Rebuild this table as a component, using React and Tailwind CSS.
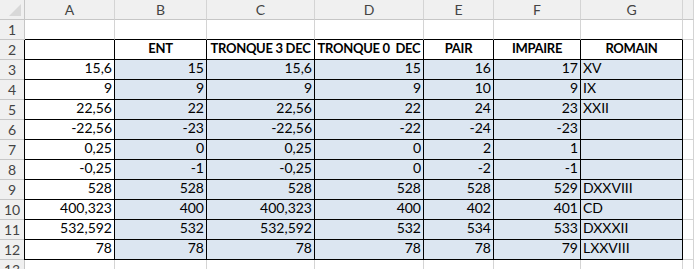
const cols = ["A", "B", "C", "D", "E", "F", "G", ""]

const headers = ["", "ENT", "TRONQUE 3 DEC", "TRONQUE 0  DEC", "PAIR", "IMPAIRE", "ROMAIN"]

const rows = [
  ["15,6", "15", "15,6", "15", "16", "17", "XV"],
  ["9", "9", "9", "9", "10", "9", "IX"],
  ["22,56", "22", "22,56", "22", "24", "23", "XXII"],
  ["-22,56", "-23", "-22,56", "-22", "-24", "-23", ""],
  ["0,25", "0", "0,25", "0", "2", "1", ""],
  ["-0,25", "-1", "-0,25", "0", "-2", "-1", ""],
  ["528", "528", "528", "528", "528", "529", "DXXVIII"],
  ["400,323", "400", "400,323", "400", "402", "401", "CD"],
  ["532,592", "532", "532,592", "532", "534", "533", "DXXXII"],
  ["78", "78", "78", "78", "78", "79", "LXXVIII"],
]

const gridCols = "grid grid-cols-[25px_90px_92px_108px_109px_70px_87px_102px_1fr]"

const RowHead = ({ n }) => (
  <div className="h-[20px] bg-[#f0f0f0] border-r border-b border-[#c6c6c6] text-[#444] flex items-center justify-center text-[14px]">
    {n}
  </div>
)

const Blank = ({ bottomBlack }) => (
  <div
    className={`h-[20px] border-r border-r-[#d4d4d4] border-b ${
      bottomBlack ? "border-b-black" : "border-b-[#d4d4d4]"
    }`}
  />
)

const App = () => {
  return (
    <div
      className="w-[694px] h-[269px] overflow-hidden bg-white text-black"
      style={{ fontFamily: "Lato, 'Open Sans', sans-serif" }}
    >
      {/* column letters */}
      <div className={gridCols}>
        <div className="relative h-[20px] bg-[#f0f0f0] border-r border-b border-[#c6c6c6]">
          <div className="absolute right-[3px] bottom-[3px] w-0 h-0 border-l-[12px] border-l-transparent border-b-[12px] border-b-[#d8d8d8]" />
        </div>
        {cols.map((c, i) => (
          <div
            key={i}
            className="h-[20px] bg-[#f0f0f0] border-r border-r-[#d4d4d4] border-b border-b-[#c6c6c6] text-[#444] text-[14px] flex items-center justify-center"
          >
            {c}
          </div>
        ))}
      </div>

      {/* row 1 */}
      <div className={gridCols}>
        <RowHead n={1} />
        {cols.map((c, i) => (
          <Blank key={i} bottomBlack={i < 7} />
        ))}
      </div>

      {/* row 2 : table headers */}
      <div className={gridCols}>
        <RowHead n={2} />
        {headers.map((h, i) => (
          <div
            key={i}
            className={`h-[20px] border-r border-b border-black flex items-end justify-center pb-[1px] font-bold text-[13px] tracking-[-0.3px] whitespace-pre overflow-hidden ${
              i === 0 ? "border-l -ml-px" : ""
            }`}
          >
            {h}
          </div>
        ))}
        <Blank />
      </div>

      {/* data rows */}
      {rows.map((r, ri) => (
        <div key={ri} className={gridCols}>
          <RowHead n={ri + 3} />
          {r.map((v, i) => (
            <div
              key={i}
              className={`h-[20px] border-r border-b border-black flex items-end pb-[1px] text-[14px] whitespace-nowrap ${
                i === 0 ? "bg-white border-l -ml-px" : "bg-[#dce6f1]"
              } ${i === 6 ? "justify-start pl-[2px]" : "justify-end pr-[2px]"}`}
            >
              {v}
            </div>
          ))}
          <Blank />
        </div>
      ))}

      {/* row 13 */}
      <div className={gridCols}>
        <RowHead n={13} />
        {cols.map((c, i) => (
          <Blank key={i} />
        ))}
      </div>
    </div>
  )
}

export default App
